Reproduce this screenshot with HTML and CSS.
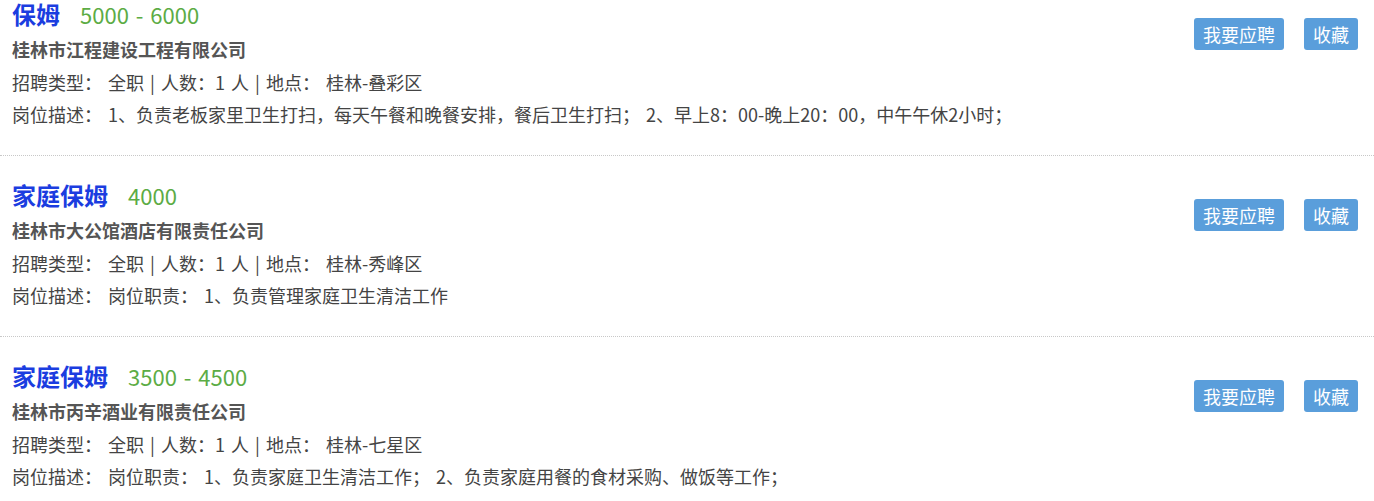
FILE: index.html
```html
<!DOCTYPE html>
<html lang="zh-CN">
<head>
<meta charset="utf-8">
<title>招聘列表</title>
<link rel="stylesheet" href="styles.css">
</head>
<body>
<div class="list">
  <div class="job">
    <div class="info">
      <div class="title-row"><span class="title">保姆</span><span class="salary">5000 - 6000</span></div>
      <div class="company">桂林市江程建设工程有限公司</div>
      <div class="line">招聘类型： 全职 | 人数：1 人 | 地点： 桂林-叠彩区</div>
      <div class="line">岗位描述： 1、负责老板家里卫生打扫，每天午餐和晚餐安排，餐后卫生打扫； 2、早上8：00-晚上20：00，中午午休2小时；</div>
    </div>
    <div class="actions">
      <a class="btn">我要应聘</a>
      <a class="btn">收藏</a>
    </div>
  </div>
  <div class="job">
    <div class="info">
      <div class="title-row"><span class="title">家庭保姆</span><span class="salary">4000</span></div>
      <div class="company">桂林市大公馆酒店有限责任公司</div>
      <div class="line">招聘类型： 全职 | 人数：1 人 | 地点： 桂林-秀峰区</div>
      <div class="line">岗位描述： 岗位职责： 1、负责管理家庭卫生清洁工作</div>
    </div>
    <div class="actions">
      <a class="btn">我要应聘</a>
      <a class="btn">收藏</a>
    </div>
  </div>
  <div class="job">
    <div class="info">
      <div class="title-row"><span class="title">家庭保姆</span><span class="salary">3500 - 4500</span></div>
      <div class="company">桂林市丙辛酒业有限责任公司</div>
      <div class="line">招聘类型： 全职 | 人数：1 人 | 地点： 桂林-七星区</div>
      <div class="line">岗位描述： 岗位职责： 1、负责家庭卫生清洁工作； 2、负责家庭用餐的食材采购、做饭等工作；</div>
    </div>
    <div class="actions">
      <a class="btn">我要应聘</a>
      <a class="btn">收藏</a>
    </div>
  </div>
</div>
</body>
</html>
```
FILE: styles.css
```css
html, body {
  margin: 0;
  padding: 0;
  background: #fff;
  overflow: hidden;
}
body {
  font-family: "Noto Sans CJK SC", "Noto Sans", sans-serif;
  color: #444;
}
.list {
  margin-top: -25px;
}
.job {
  display: flex;
  align-items: flex-start;
  padding: 21px 16px 25px 12px;
  border-bottom: 1px dotted #c8c8c8;
}
.info {
  flex: 1;
}
.title-row {
  height: 36px;
  line-height: 36px;
  white-space: nowrap;
}
.title {
  font-size: 24px;
  font-weight: bold;
  color: #1b3de0;
}
.salary {
  font-size: 22px;
  color: #5cac45;
  margin-left: 20px;
  word-spacing: 2px;
}
.company {
  height: 34px;
  line-height: 34px;
  font-size: 18px;
  font-weight: bold;
  color: #555;
}
.line {
  height: 32px;
  line-height: 32px;
  font-size: 18px;
  color: #444;
  white-space: pre;
  word-spacing: 2px;
}
.actions {
  display: flex;
  gap: 20px;
  margin-top: 22px;
}
.btn {
  display: block;
  height: 32px;
  line-height: 32px;
  padding: 0 9px;
  font-size: 18px;
  color: #fff;
  background: #5a9edb;
  border-radius: 3px;
  cursor: pointer;
}
```
